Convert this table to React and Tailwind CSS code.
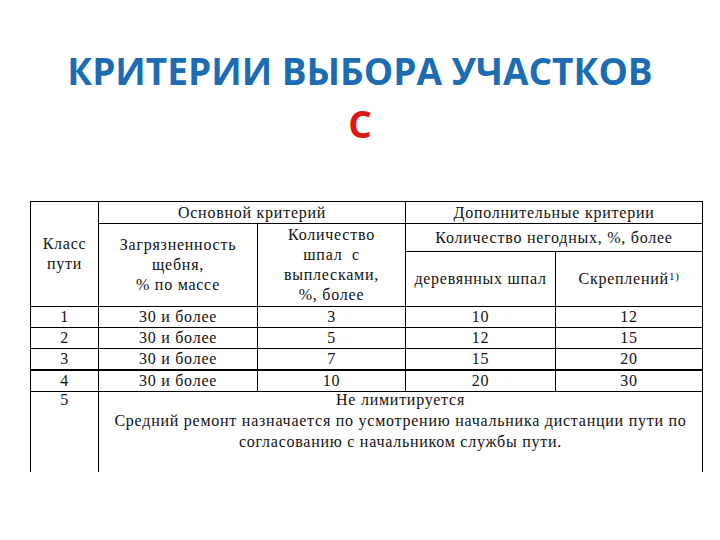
import React from 'react';

const rows = [
  ['1', '30 и более', '3', '10', '12'],
  ['2', '30 и более', '5', '12', '15'],
  ['3', '30 и более', '7', '15', '20'],
  ['4', '30 и более', '10', '20', '30'],
];

const cell = 'border border-black text-center align-middle p-0 leading-[20px]';

export default function App() {
  return (
    <div className="w-[720px] h-[540px] bg-white overflow-hidden">
      {/* Title */}
      <div className="pt-[46px] text-center font-[family-name:'Open_Sans',sans-serif] font-bold text-[37px] leading-[50px]">
        <div className="text-[#1b6cb3]">КРИТЕРИИ ВЫБОРА УЧАСТКОВ</div>
        <div className="text-[#e01414] mt-[3px]">С</div>
      </div>

      {/* Criteria table */}
      <div className="ml-[30px] mt-[52px] w-[672px] font-[family-name:'Liberation_Serif',serif] text-[16px] tracking-[0.75px] text-[#111]">
        <table className="w-full table-fixed border-collapse">
          <colgroup>
            <col className="w-[68px]" />
            <col className="w-[159px]" />
            <col className="w-[148px]" />
            <col className="w-[150px]" />
            <col className="w-[147px]" />
          </colgroup>
          <tbody>
            <tr className="h-[22px]">
              <td rowSpan={3} className={cell}>Класс<br />пути</td>
              <td colSpan={2} className={cell}>Основной критерий</td>
              <td colSpan={2} className={cell}>Дополнительные критерии</td>
            </tr>
            <tr className="h-[28px]">
              <td rowSpan={2} className={cell}>Загрязненность<br />щебня,<br />% по массе</td>
              <td rowSpan={2} className={cell}>Количество<br />шпал&nbsp; с<br />выплесками,<br />%, более</td>
              <td colSpan={2} className={cell}>Количество негодных, %, более</td>
            </tr>
            <tr className="h-[55px]">
              <td className={cell}>деревянных шпал</td>
              <td className={cell}>
                Скреплений<sup className="text-[11px] relative -top-[4px]">1)</sup>
              </td>
            </tr>
            {rows.map((r, i) => (
              <tr key={r[0]} className="h-[21px]">
                {r.map((v, j) => (
                  <td key={j} className={`${cell} ${i === 3 ? 'border-t-2' : ''}`}>{v}</td>
                ))}
              </tr>
            ))}
            <tr className="h-[80px]">
              <td className="border-l border-r border-t border-black text-center align-top p-0 leading-[21px]">
                <div className="-mt-[3px]">5</div>
              </td>
              <td colSpan={4} className="border-l border-r border-t border-black text-center align-top p-0 leading-[21px]">
                <div className="-mt-[3px]">
                  Не лимитируется
                  <br />
                  Средний ремонт назначается по усмотрению начальника дистанции пути по
                  <br />
                  согласованию с начальником службы пути.
                </div>
              </td>
            </tr>
          </tbody>
        </table>
      </div>
    </div>
  );
}
